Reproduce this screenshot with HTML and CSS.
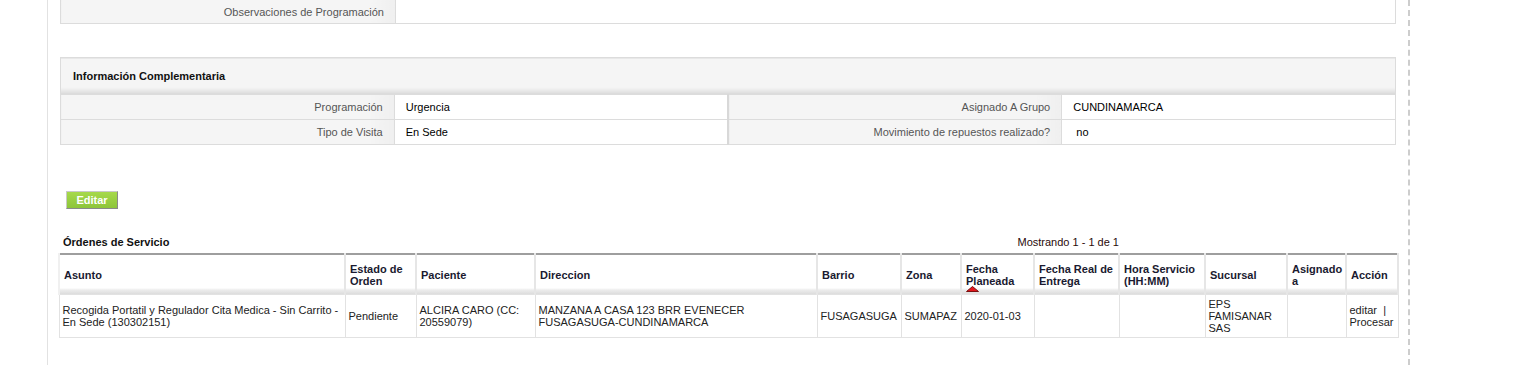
FILE: index.html
```html
<!DOCTYPE html>
<html lang="es">
<head>
  <meta charset="UTF-8" />
  <meta name="viewport" content="width=device-width, initial-scale=1.0"/>
  <title>Orden de servicio</title>
  <link rel="stylesheet" href="styles.css">
</head>
<body>
  <div class="page">

    <table class="detail detail-top">
      <tr>
        <td class="label">Observaciones de Programación</td>
        <td class="value"></td>
      </tr>
    </table>

    <table class="detail detail-info">
      <tr>
        <th colspan="4" class="panel-title">Información Complementaria</th>
      </tr>
      <tr>
        <td class="label">Programación</td>
        <td class="value">Urgencia</td>
        <td class="label split">Asignado A Grupo</td>
        <td class="value">CUNDINAMARCA</td>
      </tr>
      <tr>
        <td class="label">Tipo de Visita</td>
        <td class="value">En Sede</td>
        <td class="label split">Movimiento de repuestos realizado?</td>
        <td class="value">&nbsp;no</td>
      </tr>
    </table>

    <div class="actions">
      <button type="button" class="btn-edit">Editar</button>
    </div>

    <div class="list-head">
      <span class="list-title">Órdenes de Servicio</span>
      <span class="pager">Mostrando 1 - 1 de 1</span>
    </div>

    <table class="orders">
      <thead>
        <tr>
          <th class="w-asunto">Asunto</th>
          <th class="w-estado">Estado de Orden</th>
          <th class="w-paciente">Paciente</th>
          <th class="w-dir">Direccion</th>
          <th class="w-barrio">Barrio</th>
          <th class="w-zona">Zona</th>
          <th class="w-fplan">Fecha Planeada
            <svg class="sort" width="13" height="6" viewBox="0 0 13 6"><polygon points="6.5,0.5 12.5,5.5 0.5,5.5" fill="#e3151a" stroke="#7a1010" stroke-width="1"/></svg>
          </th>
          <th class="w-freal">Fecha Real de Entrega</th>
          <th class="w-hora">Hora Servicio (HH:MM)</th>
          <th class="w-suc">Sucursal</th>
          <th class="w-asig">Asignado a</th>
          <th class="w-accion">Acción</th>
        </tr>
      </thead>
      <tbody>
        <tr>
          <td>Recogida Portatil y Regulador Cita Medica - Sin Carrito - En Sede (130302151)</td>
          <td>Pendiente</td>
          <td>ALCIRA CARO (CC: 20559079)</td>
          <td>MANZANA A CASA 123 BRR EVENECER FUSAGASUGA-CUNDINAMARCA</td>
          <td>FUSAGASUGA</td>
          <td>SUMAPAZ</td>
          <td>2020-01-03</td>
          <td></td>
          <td></td>
          <td>EPS FAMISANAR SAS</td>
          <td></td>
          <td><a href="#">editar</a> &nbsp;| <a href="#">Procesar</a></td>
        </tr>
      </tbody>
    </table>

  </div>
</body>
</html>
```

FILE: styles.css
```css
:root {
  --line: #dcdcdc;
  --label-bg: #f5f5f5;
  --label-text: #555;
  --text: #222;
}

body {
  margin: 0;
  font-family: "Liberation Sans", Arial, sans-serif;
  font-size: 11px;
  color: var(--text);
  background: #fff;
}

.page {
  margin-left: 47px;
  width: 1336px;
  min-height: 365px;
  padding: 0 12px 0 12px;
  border-left: 1px solid #e2e2e2;
  border-right: 2px dashed #cdcdcd;
}

/* detail panels */
.detail {
  width: 100%;
  table-layout: fixed;
  border-collapse: collapse;
  border: 1px solid var(--line);
}

.detail td {
  height: 24px;
  padding: 0 11px;
  border: 1px solid var(--line);
}

.detail .label {
  width: 312px;
  text-align: right;
  color: var(--label-text);
  background: linear-gradient(to right, var(--label-bg) 92%, #efefef 100%);
}

.detail .value {
  color: #000;
}

.detail .split {
  border-left: 2px solid #d8d8d8;
}

.detail-top {
  border-top: none;
}

.detail-top td {
  border-top: none;
  height: 23px;
}

.detail-info {
  margin-top: 33px;
}

.panel-title {
  height: 36px;
  padding: 0 12px;
  text-align: left;
  font-weight: bold;
  color: #111;
  background: linear-gradient(to bottom, #f5f5f5 0, #f5f5f5 29px, #e9e9e9 32px, #d8d8d8 36px);
}

/* edit button */
.actions {
  margin-top: 46px;
  padding-left: 6px;
}

.btn-edit {
  width: 52px;
  height: 18px;
  padding: 0;
  font-family: inherit;
  font-size: 11px;
  font-weight: bold;
  color: #fff;
  background: linear-gradient(to bottom, #a6d94b, #8dc53a);
  border: 1px solid;
  border-color: #c9c9c9 #8a8a8a #8a8a8a #c9c9c9;
  cursor: pointer;
}

/* orders list */
.list-head {
  display: flex;
  align-items: baseline;
  justify-content: space-between;
  height: 17px;
  margin: 27px -2px 0;
  padding: 0 279px 0 5px;
}

.list-title {
  font-weight: bold;
  color: #111;
}

.pager {
  color: #2a0a0a;
}

.orders {
  width: 1339px;
  margin: 0 -2px;
  table-layout: fixed;
  border-collapse: collapse;
  border-top: 2px solid #9e9e9e;
}

.orders th,
.orders td {
  box-sizing: border-box;
  line-height: 12px;
}

.orders th {
  height: 40px;
  padding: 4px 2px 2px 4px;
  text-align: left;
  font-weight: bold;
  color: #1a1a30;
  border-left: 2px solid #e6e6e6;
  border-right: 2px solid #e6e6e6;
  background: linear-gradient(to bottom, #fff 0, #fff 33px, #ececec 35px, #d9d9d9 40px);
}

.orders th:first-child {
  border-left: 2px solid #f0f0f0;
}

.orders td {
  height: 42px;
  padding: 3px;
  vertical-align: middle;
  border: 1px solid #e2e2e2;
}

.orders a {
  color: var(--text);
  text-decoration: none;
}

.sort {
  display: block;
  margin: -1px 0 -5px 0;
}

.w-asunto { width: 286px; }
.w-estado { width: 71px; }
.w-paciente { width: 119px; }
.w-dir { width: 282px; }
.w-barrio { width: 84px; }
.w-zona { width: 60px; }
.w-fplan { width: 73px; }
.w-freal { width: 85px; }
.w-hora { width: 86px; }
.w-suc { width: 82px; }
.w-asig { width: 59px; }
.w-accion { width: 52px; color: #000; }
```
